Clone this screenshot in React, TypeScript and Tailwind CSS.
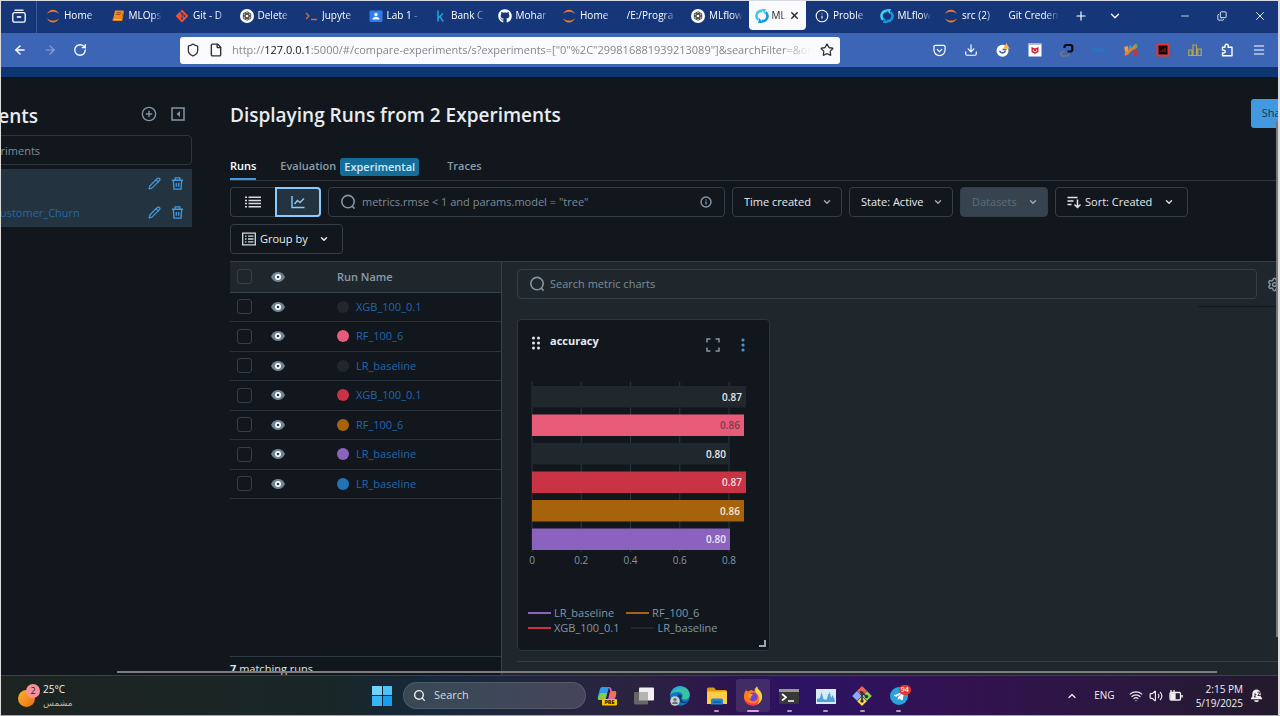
import type { ReactNode } from "react";
import {
  ArrowLeft, ArrowRight, RotateCw, Shield, File, Star, Plus, ChevronDown, ChevronUp, Minus, X, Copy,
  Download, Puzzle, Menu, CirclePlus, Pencil, Trash2, Search, Info, Settings, Wifi, Volume2,
} from "lucide-react";
import { FaGithub, FaGitAlt, FaTelegramPlane } from "react-icons/fa";

const Jupyter = () => (
  <svg viewBox="0 0 14 14" className="size-[14px]" fill="#f07726">
    <path d="M1 5C2 2.400 4.200.8 7 .8S12 2.400 13 5C11.500 3.500 9.500 2.700 7 2.700S2.500 3.500 1 5z" />
    <path d="M1 9.200c1 2.600 3.200 4.200 6 4.200s5-1.600 6-4.200c-1.500 1.500-3.500 2.300-6 2.300s-4.500-.8-6-2.300z" />
  </svg>
);
const Mlflow = () => (
  <svg viewBox="0 0 14 14" className="size-[14px]" fill="none" strokeWidth="2.600">
    <path d="M3.400 10.800A5 5 0 0 1 7.500 2" stroke="#43c9ed" />
    <path d="M10.600 3.200A5 5 0 0 1 6.500 12" stroke="#0e9be0" />
    <path d="M6.500 0H11L9.500 5z" fill="#43c9ed" />
    <path d="M7.500 14H3L4.500 9z" fill="#0e9be0" />
  </svg>
);
const Gpt = () => (
  <svg viewBox="0 0 14 14" className="size-[14px]">
    <circle cx="7" cy="7" r="7" fill="#fff" />
    <g fill="none" stroke="#444" strokeWidth=".9">
      <rect x="5.200" y="2.800" width="3.600" height="8.400" rx="1.800" />
      <rect x="5.200" y="2.800" width="3.600" height="8.400" rx="1.800" transform="rotate(60 7 7)" />
      <rect x="5.200" y="2.800" width="3.600" height="8.400" rx="1.800" transform="rotate(120 7 7)" />
    </g>
  </svg>
);
const Book = () => (
  <svg viewBox="0 0 14 14" className="size-[14px]">
    <path d="M4 1.500h8.500L10.800 9H2.300z" fill="#f58a1f" />
    <path d="M2.300 9h8.500l1.700-7.500.6 1L11.300 12H2.600c-1.400 0-1.600-1.800-.3-3z" fill="#e57b10" />
    <path d="M3 10.400h7.500" stroke="#ffd9a8" strokeWidth=".9" />
    <path d="M5.500 3.700h4.500M5.100 5.500h4.500" stroke="#8a4305" strokeWidth=".8" />
  </svg>
);
const Prompt = () => (
  <svg viewBox="0 0 14 14" className="size-[14px]" fill="none" stroke="#c8703a" strokeWidth="1.300">
    <path d="M2 4l3 3-3 3M7 10.500h6" />
  </svg>
);
const Classroom = () => (
  <svg viewBox="0 0 14 14" className="size-[14px]">
    <rect x=".5" y="1.500" width="13" height="11.500" rx="1.200" fill="#2f7de9" />
    <circle cx="7" cy="5.500" r="1.700" fill="#fff" />
    <path d="M3.500 10.500c0-3.600 7-3.600 7 0z" fill="#fff" />
  </svg>
);
const Kaggle = () => (
  <svg viewBox="0 0 14 14" className="size-[14px]" fill="none" stroke="#1fa8d8" strokeWidth="1.500">
    <path d="M5 1.500v11M10 4.500L5.300 9M7 7.600l3.200 4.900" />
  </svg>
);

type Tab = { label: string; icon?: ReactNode; active?: boolean };
const tabs: Tab[] = [
  { label: "Home", icon: <Jupyter /> },
  { label: "MLOps", icon: <Book /> },
  { label: "Git - D", icon: <FaGitAlt className="size-[14px] text-[#f0502f]" /> },
  { label: "Delete", icon: <Gpt /> },
  { label: "Jupyte", icon: <Prompt /> },
  { label: "Lab 1 -", icon: <Classroom /> },
  { label: "Bank C", icon: <Kaggle /> },
  { label: "Mohar", icon: <FaGithub className="size-[14px] text-white" /> },
  { label: "Home", icon: <Jupyter /> },
  { label: "/E:/Progra" },
  { label: "MLflow", icon: <Gpt /> },
  { label: "MLf", icon: <Mlflow />, active: true },
  { label: "Proble", icon: <Info className="size-[14px]" strokeWidth={1.800} /> },
  { label: "MLflow", icon: <Mlflow /> },
  { label: "src (2)", icon: <Jupyter /> },
  { label: "Git Creden" },
];

function TabStrip() {
  return (
    <div className="flex h-8 shrink-0 bg-[#15377a] text-white">
      <button aria-label="Firefox View" className="flex w-9 shrink-0 items-center justify-center border-r border-[#3c5a94] pb-[2px]">
        <svg viewBox="0 0 14 14" className="size-[14px]" fill="none" stroke="currentColor" strokeWidth="1.300">
          <path d="M2.500 1.200h9" />
          <rect x=".8" y="3.600" width="12.400" height="9.600" rx="1.800" />
          <path d="M4.800 8h4.400" strokeWidth="1.600" />
        </svg>
      </button>
      <div className="flex min-w-0 flex-1">
        {tabs.map((t, i) => (
          <button
            key={i}
            className={
              t.active
                ? "mb-[3px] ml-[2px] flex min-w-0 flex-1 items-center gap-[3px] rounded-b-sm bg-[#fbfbfe] pl-[6px] text-[10px] text-[#222]"
                : "flex min-w-0 flex-1 items-center gap-1 pr-1 pb-[3px] pl-[9px] text-[10px]"
            }
          >
            {t.icon && <span className="shrink-0">{t.icon}</span>}
            <span className="min-w-0 flex-1 overflow-hidden mask-r-from-70% text-left whitespace-nowrap">{t.label}</span>
            {t.active && <X className="mr-[6px] size-[11px] shrink-0" strokeWidth={3} />}
          </button>
        ))}
      </div>
      <div className="flex w-[214px] shrink-0 items-center justify-between pr-[11px] pb-[2px] pl-[10px]">
        <div className="flex gap-5">
          <button aria-label="New tab"><Plus className="size-[14px]" strokeWidth={2} /></button>
          <button aria-label="List all tabs"><ChevronDown className="size-[14px]" strokeWidth={2.200} /></button>
        </div>
        <div className="flex items-center gap-[26px]">
          <button aria-label="Minimize"><Minus className="size-3" strokeWidth={1.500} /></button>
          <button aria-label="Restore"><Copy className="size-[10px] -scale-y-100" strokeWidth={2} /></button>
          <button aria-label="Close"><X className="size-[14px]" strokeWidth={1.500} /></button>
        </div>
      </div>
    </div>
  );
}

function NavBar() {
  return (
    <div className="flex h-[34px] shrink-0 items-center bg-[#3d65b5] text-white">
      <div className="flex w-[179px] shrink-0 items-center gap-4 pl-3">
        <button aria-label="Back"><ArrowLeft className="size-[14px]" strokeWidth={2.500} /></button>
        <button aria-label="Forward" className="text-[#8aa4d6]"><ArrowRight className="size-[14px]" /></button>
        <button aria-label="Reload"><RotateCw className="size-[14px]" strokeWidth={2.300} /></button>
      </div>
      <div className="flex h-[27px] w-[660px] items-center gap-[9px] rounded-[3px] bg-[#fafaff] px-[6px] text-[#333]">
        <Shield className="size-[14px] shrink-0" strokeWidth={2.200} />
        <File className="size-[14px] shrink-0" strokeWidth={2.400} />
        <div className="min-w-0 flex-1 overflow-hidden mask-r-from-95% text-[11px] whitespace-nowrap text-[#85858f]">
          http://<span className="text-[#15141a]">127.0.0.1</span>
          :5000/#/compare-experiments/s?experiments=["0"%2C"299816881939213089"]&amp;searchFilter=&amp;ord
        </div>
        <button aria-label="Bookmark"><Star className="size-[14px]" strokeWidth={2.200} /></button>
      </div>
      <div className="flex min-w-0 flex-1 items-center justify-end gap-[18px] pr-3">
        <svg viewBox="0 0 14 14" className="size-[13px]" fill="none" stroke="currentColor" strokeWidth="1.300">
          <path d="M2.500 1.500h9q1.500 0 1.500 1.500v3.500a6 6 0 0 1-12 0V3q0-1.500 1.500-1.500z" />
          <path d="M4.200 5.500L7 8.200l2.800-2.700" />
        </svg>
        <Download className="size-[14px]" strokeWidth={2} />
        <svg viewBox="0 0 14 14" className="size-[14px]">
          <circle cx="6.500" cy="7.800" r="6" fill="#fff" />
          <path d="M3.500 7.800a3.200 3.200 0 0 0 6 0M6.500 6.500h4" fill="none" stroke="#3d65b5" strokeWidth="1.600" />
          <path d="M10.400 0l3.400 5.800H7z" fill="#ffb638" />
        </svg>
        <svg viewBox="0 0 14 14" className="size-[14px]">
          <path d="M.5.5h13v13H.5z" fill="#fff" />
          <path d="M.5.5h13V2H.5z" fill="#bbb" />
          <path d="M3.500 4l3.500 1.500L10.500 4v5L7 11 3.500 9z" fill="#d3142c" />
          <path d="M5.300 6.500v1.500L7 9l1.700-1V6.500" fill="none" stroke="#fff" />
        </svg>
        <svg viewBox="0 0 14 14" className="size-[14px]" fill="none" strokeWidth="2.200">
          <path d="M5 8.500H3.500Q1 8.500 1 11t2.500 2H6q2.500 0 2.500-2.500" stroke="#777" strokeWidth="1.600" />
          <path d="M4.500 5V3.800Q4.500 2 6.500 2h3.800q2 0 2 2v2.500q0 2-2 2H7.500" stroke="#0a0a0a" />
        </svg>
        <svg viewBox="0 0 14 14" className="size-[14px]" fill="none" stroke="#2a72c4" strokeWidth="1.800">
          <path d="M2 4.500v5M5 4v6M9 4v6M12 4.500v5M2 7h10" />
        </svg>
        <svg viewBox="0 0 14 14" className="size-[14px]">
          <path d="M0 4l4-1 1 8-3 1z" fill="#e9a13a" />
          <path d="M5 3l2-1 1 4-3 3z" fill="#2aa0dc" />
          <path d="M9 3l3-3 2 4-4 3z" fill="#4fb04f" />
          <path d="M9 7h4v6H9z" fill="#c8323a" />
          <path d="M1 12L11.500 3" stroke="#f47d1f" strokeWidth="2.400" />
        </svg>
        <svg viewBox="0 0 14 14" className="size-[14px]">
          <path d="M.5.5h13v13H.5z" fill="#e2382f" />
          <path d="M2.500 2.500h9v9h-9z" fill="#160606" />
          <path d="M5 9V7.500M7 9V6M9 9V4.500" stroke="#a32020" />
        </svg>
        <svg viewBox="0 0 14 14" className="size-[14px]" fill="none" stroke="#b9a742" strokeWidth="1.200">
          <path d="M.8 7h3.200v5.500H.8zM5 2h3.500v10.500H5zM9.800 6h3.400v6.500H9.800z" />
        </svg>
        <svg viewBox="0 0 14 14" className="size-[14px]" fill="none" stroke="currentColor" strokeWidth="1.400">
          <path d="M2.500 4.200H5V2.800a1.600 1.600 0 0 1 3.200 0v1.400H12v8.600H2.500V10h1.300a1.400 1.400 0 0 0 0-2.900H2.500z" strokeLinejoin="round" />
        </svg>
        <Menu className="size-[14px]" strokeWidth={1.800} />
      </div>
    </div>
  );
}

function Sidebar() {
  return (
    <aside className="flex w-[191px] shrink-0 justify-end overflow-hidden">
      <div className="w-[264px] shrink-0 pt-[26px]">
        <div className="flex h-[22px] items-center justify-end gap-[14px] pr-[7px] text-[#8396a5]">
          <h2 className="mr-[89px] pt-1 text-[19px] font-semibold text-[#e8ecf0]">Experiments</h2>
          <button aria-label="New experiment"><CirclePlus className="size-4" /></button>
          <button aria-label="Collapse sidebar">
            <svg viewBox="0 0 14 14" className="size-[14px]" fill="none" stroke="currentColor" strokeWidth="1.500">
              <path d="M1 1h12v12H1z" />
              <path d="M9 4v6L5.500 7z" fill="currentColor" stroke="none" />
            </svg>
          </button>
        </div>
        <input
          aria-label="Search experiments"
          placeholder="Search experiments"
          className="mt-[10px] block h-[30px] w-full rounded-[4px] border border-[#2c363f] bg-transparent pl-[9px] text-[11px] placeholder:text-[#7b8c99]"
        />
        <ul className="mt-1 bg-[#233340] text-[11px]">
          {["", "Customer_Churn"].map((name) => (
            <li key={name} className="flex h-[29px] items-center justify-end gap-[10px] pr-2 text-[#4299e0]">
              {name && <a href="#experiment" className="mr-auto pt-[2px] pl-[65px] text-[#2067ae]">{name}</a>}
              <button aria-label="Rename experiment"><Pencil className="size-[13px]" strokeWidth={2.200} /></button>
              <button aria-label="Delete experiment">
                <svg viewBox="0 0 14 14" className="size-[13px]" fill="none" stroke="currentColor" strokeWidth="1.400">
                  <path d="M1 3.500h12M4.500 3.500V1h5v2.500M2.500 3.500l.7 9.500h7.600l.7-9.500M5.700 6.500v4M8.300 6.500v4" />
                </svg>
              </button>
            </li>
          ))}
        </ul>
      </div>
    </aside>
  );
}

const boxed = "h-[30px] rounded-[4px] border border-[#323e48]";

function Dropdown({ label, className, disabled }: { label: string; className: string; disabled?: boolean }) {
  return (
    <div className={`relative shrink-0 ${className}`}>
      <select
        aria-label={label}
        disabled={disabled}
        className={
          disabled
            ? `${boxed} block w-full appearance-none bg-[#37444f] pl-[11px] text-[11px] text-[#5b6c7a] opacity-100`
            : label.startsWith("Sort")
              ? `${boxed} block w-full appearance-none bg-transparent pl-[29px] text-[11px] text-[#e8ecf0]`
              : `${boxed} block w-full appearance-none bg-transparent pl-[11px] text-[11px] text-[#e8ecf0]`
        }
      >
        <option>{label}</option>
      </select>
      {label.startsWith("Sort") && (
        <svg viewBox="0 0 14 14" className="absolute top-2 left-[12px] size-[14px]" fill="none" stroke="#e0e6ea" strokeWidth="1.500">
          <path d="M.5 2.500h10M.5 6h6M.5 9.500h4M10.500 4.500v8M7.500 9.500l3 3 3-3" />
        </svg>
      )}
      <ChevronDown
        className={
          label.startsWith("Sort")
            ? "pointer-events-none absolute top-[10px] right-[14px] size-[10px] text-[#d5dce2]"
            : "pointer-events-none absolute top-[10px] right-[10px] size-[10px] text-[#9aa9b5]"
        }
        strokeWidth={3.500}
      />
    </div>
  );
}

const Eye = () => (
  <svg viewBox="0 0 14 10" className="h-[10px] w-[14px]">
    <path d="M0 5C1.500 1.800 4 0 7 0s5.500 1.800 7 5c-1.500 3.200-4 5-7 5S1.500 8.200 0 5z" fill="#6f8393" />
    <circle cx="7" cy="5" r="3" fill="#fff" />
    <circle cx="7" cy="5" r="1.300" fill="#2b3944" />
  </svg>
);

const Lens = () => (
  <svg viewBox="0 0 16 16" className="size-4 shrink-0 text-[#8396a5]" fill="none" stroke="currentColor" strokeWidth="1.600">
    <circle cx="8" cy="7.600" r="6.200" />
    <path d="M12 12l2.600 2.600" />
  </svg>
);

const runs = [
  { name: "XGB_100_0.1", dot: "bg-[#20272e]" },
  { name: "RF_100_6", dot: "bg-[#e85c7a]" },
  { name: "LR_baseline", dot: "bg-[#20272e]" },
  { name: "XGB_100_0.1", dot: "bg-[#c93343]" },
  { name: "RF_100_6", dot: "bg-[#a6630c]" },
  { name: "LR_baseline", dot: "bg-[#8b63bf]" },
  { name: "LR_baseline", dot: "bg-[#2272b4]" },
];
const box = "block size-[15px] appearance-none rounded-[3px] border border-[#33414c]";

function RunsTable() {
  return (
    <div className="flex w-[272px] shrink-0 flex-col border-r border-[#37444f]">
      <table className="h-[237px] w-full table-fixed text-[11px]">
        <thead>
          <tr className="h-[30px] border-b border-[#37444f] bg-[#1f272d]">
            <th className="w-10 pl-[7px]"><input type="checkbox" aria-label="Select all runs" className={box} /></th>
            <th className="w-[67px] pl-px"><Eye /></th>
            <th className="text-left font-semibold text-[#8b9ba8]">Run Name</th>
          </tr>
        </thead>
        <tbody>
          {runs.map((r, i) => (
            <tr key={i} className="border-b border-[#2a343c]">
              <td className="pl-[7px]"><input type="checkbox" aria-label={`Select run ${r.name}`} className={box} /></td>
              <td className="pl-px"><Eye /></td>
              <td>
                <div className="flex items-center gap-[7px]">
                  <span className={`size-3 rounded-full ${r.dot}`} />
                  <a href="#run" className="text-[#2067ae]">{r.name}</a>
                </div>
              </td>
            </tr>
          ))}
        </tbody>
      </table>
      <div className="mt-auto h-[19px] border-t border-[#2f3b44] pt-1 text-[11px] leading-4 text-[#dfe5ea]">
        <strong className="font-bold">7</strong> matching runs
      </div>
    </div>
  );
}

const bars = [
  { v: "0.87", w: 214, fill: "#20272d", text: "#e6eaee" },
  { v: "0.86", w: 212, fill: "#e85c7a", text: "#7d3b4d" },
  { v: "0.80", w: 198, fill: "#20272d", text: "#e6eaee" },
  { v: "0.87", w: 214, fill: "#c93343", text: "#f4dfe2" },
  { v: "0.86", w: 212, fill: "#a6630c", text: "#f2e6d6" },
  { v: "0.80", w: 198, fill: "#8b63bf", text: "#ede6f6" },
];
const legend = [
  { name: "LR_baseline", line: "bg-[#8b63bf]" },
  { name: "RF_100_6", line: "bg-[#a6630c]" },
  { name: "XGB_100_0.1", line: "bg-[#c93343]" },
  { name: "LR_baseline", line: "bg-[#20272d]" },
];

function ChartCard() {
  return (
    <section className="relative flex h-[332px] w-[253px] flex-col rounded-[4px] border border-[#2b363f] bg-[#11171d]">
      <header className="flex items-start pt-[13px] pr-[23px] pl-[13px]">
        <svg viewBox="0 0 10 14" className="mt-[3px] h-[14px] w-[10px]" fill="#e0e6ea">
          {[2, 7, 12].map((y) => (
            <g key={y}><circle cx="2.500" cy={y} r="1.500" /><circle cx="7.500" cy={y} r="1.500" /></g>
          ))}
        </svg>
        <h3 className="ml-[9px] text-[11px] leading-4 font-bold text-[#e8ecf0]">accuracy</h3>
        <button aria-label="Full screen" className="mt-[5px] ml-auto text-[#8396a5]">
          <svg viewBox="0 0 14 14" className="size-[14px]" fill="none" stroke="currentColor" strokeWidth="1.500">
            <path d="M1 4.500V1h3.500M9.500 1H13v3.500M13 9.500V13H9.500M4.500 13H1V9.500" />
          </svg>
        </button>
        <button aria-label="Chart options" className="mt-[5px] ml-5">
          <svg viewBox="0 0 6 14" className="h-[14px] w-[6px]" fill="#4299e0">
            <circle cx="3" cy="2" r="1.600" /><circle cx="3" cy="7" r="1.600" /><circle cx="3" cy="12" r="1.600" />
          </svg>
        </button>
      </header>
      <svg viewBox="0 0 251 194" className="mt-[30px] h-[194px] w-full" role="img" aria-label="accuracy by run">
        {["0", "0.2", "0.4", "0.6", "0.8"].map((t, i) => (
          <g key={t}>
            <path d={`M${14 + i * 49.250} 0v170`} stroke="#2c363e" />
            <text x={14 + i * 49.250} y="182" textAnchor="middle" fontSize="10" fill="#8396a5">{t}</text>
          </g>
        ))}
        {bars.map((b, i) => (
          <g key={i}>
            <rect x="14" y={4 + i * 28.500} width={b.w} height="21.500" fill={b.fill} />
            <text x={10 + b.w} y={18.500 + i * 28.500} textAnchor="end" fontSize="10" fontWeight="600" fill={b.text}>{b.v}</text>
          </g>
        ))}
      </svg>
      <div className="mt-[29px] flex flex-wrap gap-x-[12px] pl-[10px] text-[11px] leading-[15px] text-[#8396a5]">
        {legend.map((l, i) => (
          <span key={i} className="flex items-center gap-[3px]">
            <span className={`h-[2px] w-[23px] ${l.line}`} />
            {l.name}
          </span>
        ))}
      </div>
      <span className="absolute right-[3px] bottom-[3px] size-[7px] border-r-2 border-b-2 border-[#9aa9b5]" />
    </section>
  );
}

function Main() {
  return (
    <main className="flex min-w-0 flex-1 flex-col overflow-hidden pl-[38px]">
      <div className="-mr-8 flex h-[76px] shrink-0 items-start justify-between pt-[22px]">
        <h1 className="pt-1 text-[19px] leading-6 font-semibold text-[#e8ecf0]">Displaying Runs from 2 Experiments</h1>
        <button className="h-[29px] w-[59px] rounded-[3px] bg-[#4299e0] pr-2 text-[11px] text-[#153350]">Share</button>
      </div>
      <nav className="flex h-7 shrink-0 items-center gap-6 border-b border-[#2c363f] text-[11px] font-semibold text-[#8b9ba8]">
        <a href="#runs" className="flex h-full items-center border-b-2 border-[#4299e0] pt-[2px] text-white">Runs</a>
        <a href="#evaluation" className="flex items-center gap-1">
          Evaluation
          <span className="rounded-[3px] bg-[#156d99] px-1 leading-[18px] text-[#d5e9f5]">Experimental</span>
        </a>
        <a href="#traces" className="ml-1">Traces</a>
      </nav>
      <div className="mt-[6px] flex shrink-0 flex-wrap gap-[7px]">
        <div className="flex h-[30px] w-[91px]">
          <button aria-label="Table view" className="flex flex-1 items-center justify-center rounded-l-[4px] border border-r-0 border-[#323e48] text-[#d5dce2]">
            <svg viewBox="0 0 16 12" className="h-3 w-4" fill="none" stroke="currentColor" strokeWidth="1.500">
              <path d="M0 1.200h2M3.500 1.200H16M0 4.400h2M3.500 4.400H16M0 7.600h2M3.500 7.600H16M0 10.800h2M3.500 10.800H16" />
            </svg>
          </button>
          <button aria-label="Chart view" className="flex w-[46px] items-center justify-center rounded-r-[4px] border-2 border-[#8acaff] bg-[#233340] text-[#8acaff]">
            <svg viewBox="0 0 14 14" className="size-[14px]" fill="none" stroke="currentColor" strokeWidth="1.400">
              <path d="M1 1v11.500h12.500M3.500 9l3-3.500 2.500 2 4-4" />
            </svg>
          </button>
        </div>
        <div className={`${boxed} flex w-[397px] items-center gap-[6px] px-[11px]`}>
          <Lens />
          <input aria-label="Filter runs" placeholder={'metrics.rmse < 1 and params.model = "tree"'} className="min-w-0 flex-1 bg-transparent text-[11px] placeholder:text-[#7b8c99]" />
          <Info className="mr-px size-3 shrink-0 text-[#8396a5]" strokeWidth={2.800} />
        </div>
        <Dropdown label="Time created" className="w-[110px]" />
        <Dropdown label="State: Active" className="w-[104px]" />
        <Dropdown label="Datasets" className="w-[88px]" disabled />
        <Dropdown label="Sort: Created" className="w-[133px]" />
        <div className="w-full">
          <button className={`${boxed} flex w-[113px] items-center gap-1 pr-[13px] pl-[11px] text-[11px] text-[#e8ecf0]`}>
            <svg viewBox="0 0 14 14" className="size-[14px]" fill="none" stroke="#d5dce2" strokeWidth="1.300">
              <path d="M.7 1.200h12.600v11.600H.7zM3 4.200h1.500M6 4.200h5.500M3 7h1.500M6 7h5.500M3 9.800h1.500M6 9.800h5.500" />
            </svg>
            Group by
            <ChevronDown className="ml-auto size-[10px]" strokeWidth={3.500} />
          </button>
        </div>
      </div>
      <div className="mt-[7px] flex min-h-0 flex-1 border-t border-[#323e48]">
        <RunsTable />
        <div className="flex min-w-0 flex-1 flex-col overflow-hidden bg-[#1f272d] pl-[15px]">
          <div className="mt-[7px] -mr-1 flex shrink-0 items-center gap-[10px]">
            <label className={`${boxed} flex min-w-0 flex-1 items-center gap-[5px] px-[11px]`}>
              <Lens />
              <input aria-label="Search metric charts" placeholder="Search metric charts" className="min-w-0 flex-1 bg-transparent text-[11px] placeholder:text-[#7b8c99]" />
            </label>
            <button aria-label="Chart settings" className="shrink-0 text-[#8396a5]"><Settings className="size-[15px]" strokeWidth={2.300} /></button>
          </div>
          <div className="mt-[7px] ml-auto h-px w-20 shrink-0 bg-[#12191f]" />
          <div className="mt-3 shrink-0"><ChartCard /></div>
          <div className="mt-auto h-[14px] shrink-0 border-t border-[#323e48]" />
        </div>
      </div>
    </main>
  );
}

const apps: { name: string; icon: ReactNode; open?: boolean; active?: boolean }[] = [
  { name: "Copilot", icon: (
    <svg viewBox="0 0 20 20" className="size-5">
      <path d="M5 1h7L9 12q-.6 2-2.500 2H3q-3 0-2-4l2-7q.5-2 2-2z" fill="#2f9be8" />
      <path d="M3.500 7L1 12q-.5 2 2 2h3.500q2 0 2.500-2l1-5z" fill="#8acb3c" />
      <path d="M12 1q2 0 2.500 2l.5 2h2q3 0 2 4l-2 6q-.7 2-2.500 2H8q2 0 2.500-2L13 6q.5-4-3-5z" fill="#d85ac4" />
      <path d="M13 6l5.500-1q1 1 .5 4l-1 3h-6z" fill="#f2715a" />
      <rect x="5" y="13" width="15" height="6.500" rx="1" fill="#ffc400" />
      <text x="12.500" y="18.300" fontSize="5.500" fontWeight="800" textAnchor="middle" fill="#33260a">PRE</text>
    </svg>) },
  { name: "Task view", icon: (
    <svg viewBox="0 0 20 20" className="size-5">
      <rect x="5" y="1.500" width="15" height="13" rx="1" fill="#f0f0f0" />
      <rect x="0" y="6" width="14" height="12.500" rx="1" fill="#666" />
      <path d="M5 6h9v8.500H5z" fill="#b4b4b4" />
    </svg>) },
  { name: "Edge", icon: (
    <svg viewBox="0 0 20 20" className="size-5">
      <circle cx="10" cy="10" r="9.800" fill="#1375c4" />
      <path d="M.3 9C1 4 5 .2 10 .2c6 0 9.800 4.300 9.800 8.300 0 3.200-2.300 5-5 5-2.200 0-3.200-.8-2.700-1.700C13.800 9 11.500 6 8 6 4.500 6 1.200 7 .3 9z" fill="#35c3a4" />
      <path d="M.3 9C1 4 5 .2 10 .2c2 0 4 .6 5.500 1.600C9 2 3 4 .3 9z" fill="#2aa9e0" />
      <path d="M8.200 8.500c-1.800 2.800-.6 7.500 4.500 8.500 2.300.4 4.500-.3 6-1.600-2.500.8-7 .6-7.500-2.400-.2-1.300.8-1.700.8-2.700S10 7.500 8.200 8.500z" fill="#0c3f78" />
      <circle cx="5" cy="15" r="4.800" fill="#c9ced2" />
      <circle cx="5" cy="13.600" r="1.700" fill="#6a7075" />
      <path d="M2 18c0-3.500 6-3.500 6 0z" fill="#6a7075" />
    </svg>) },
  { name: "File Explorer", open: true, icon: (
    <svg viewBox="0 0 20 20" className="size-5">
      <path d="M0 3q0-1.500 1.500-1.500H7L9 4h9.500Q20 4 20 5.500V10H0z" fill="#e09a10" />
      <path d="M0 5.500h20V18H0z" fill="#ffcd45" />
      <path d="M4 14q0-1.500 1.500-1.500h9Q16 12.500 16 14v4.500H4z" fill="#1e86d8" />
      <path d="M6 16h8" stroke="#0f5ba8" strokeWidth="1.500" />
    </svg>) },
  { name: "Firefox", open: true, active: true, icon: (
    <svg viewBox="0 0 20 20" className="size-5">
      <path d="M3 4l2 1.500Q7 4 8.500 4l3 1.500Q11.500 2 14 .5q.5 2 2.500 4Q19.500 7.500 19 12c-.8 4.500-4.500 7.500-9 7.500S1.500 16.500 1 12C.7 9 1.500 6 3 4z" fill="#ff7a22" />
      <path d="M14 .5q.5 2 2.500 4 3 3 2.500 7.500c-.4 2.500-2 4.500-4 6 2-4 1.500-8-1-10.500-1.500-1.500-3-4 0-7z" fill="#ffd43a" />
      <path d="M1 11c1.500 4.500 5 6.500 9 6.500 3 0 5-1.500 6-4-.5 4-3.500 6-6.500 6C5 19.500 1.500 16 1 11z" fill="#f0355c" />
      <circle cx="10.300" cy="10.800" r="4.400" fill="#7a3fd0" />
      <path d="M5 8q3-1 5 .7L8 10.500q-1 .8.500 2-3 .5-4-2.500z" fill="#ffa22e" />
    </svg>) },
  { name: "Terminal", open: true, icon: (
    <svg viewBox="0 0 20 20" className="size-5">
      <rect x="0" y="3" width="20" height="15" rx="1" fill="#383838" />
      <path d="M0 3h20v3H0z" fill="#999" />
      <path d="M3 8l4 3.300L3 14.500M9 15h6" fill="none" stroke="#fff" strokeWidth="1.700" />
    </svg>) },
  { name: "Monitor", open: true, icon: (
    <svg viewBox="0 0 20 20" className="size-5">
      <rect x="0" y="3" width="20" height="15" fill="#d8ecf7" />
      <path d="M1 16V13l3-1 1.500-6 2 7 3 1 1.500-5 2-3 1 6 1.500-3 2 4 .5 3z" fill="#4ba3dc" />
    </svg>) },
  { name: "Git", open: true, icon: (
    <svg viewBox="0 0 20 20" className="size-5">
      <path d="M10 0l4.800 4.800L10 9.600 5.200 4.800z" fill="#f06458" />
      <path d="M5 5l4.800 5L5 14.800.2 10z" fill="#86b0f2" />
      <path d="M15 5l4.800 5-4.800 4.800L10.200 10z" fill="#8fd05c" />
      <path d="M10 10.400l4.800 4.800L10 20l-4.800-4.800z" fill="#f8dc50" />
      <path d="M8 5l6 5M10 6v9" stroke="#33333b" strokeWidth="1.600" />
      <g fill="#33333b"><circle cx="10" cy="7" r="1.700" /><circle cx="14.500" cy="10.500" r="1.700" /><circle cx="10" cy="15" r="1.700" /></g>
    </svg>) },
  { name: "Telegram", open: true, icon: (
    <span className="relative flex size-[18px] items-center justify-center rounded-full bg-[#2aa1da] text-white">
      <FaTelegramPlane className="size-3" />
      <span className="absolute -top-[2px] left-[9px] rounded-md bg-[#e8342e] px-[2px] text-[7px] leading-[10px] font-semibold">94</span>
    </span>) },
];

function Taskbar() {
  return (
    <footer className="flex h-10 shrink-0 items-center border-t border-[#3a4046] bg-[linear-gradient(90deg,#1d2422_0%,#1a2626_25%,#16293a_33%,#2b2340_50%,#2d1450_57%,#2c1364_63%,#32124f_75%,#2b1740_88%,#231a2c_100%)] text-[#f0f0f0]">
      <div className="flex flex-1 items-center gap-[3px] pl-[17px]">
        <span className="relative block h-[23px] w-[22px]">
          <span className="absolute bottom-0 left-0 size-[17px] rounded-full bg-linear-to-br from-[#fbb52c] to-[#ea6a12]" />
          <span className="absolute top-0 right-0 size-[14px] rounded-full bg-[#f7919c] text-center text-[9px] leading-[14px] text-[#32161b]">2</span>
        </span>
        <div className="text-[10px] leading-[14px]">
          <div>25°C</div>
          <div dir="rtl" className="text-[9px] text-[#b8bcbc]">مشمس</div>
        </div>
      </div>
      <div className="flex shrink-0 items-center gap-[3px]">
        <button aria-label="Start" className="flex w-9 justify-center">
          <span className="grid size-5 grid-cols-2 gap-px">
            <span className="bg-[#6dd3fb]" /><span className="bg-[#4cc2f8]" /><span className="bg-[#35b6f5]" /><span className="bg-[#149ff0]" />
          </span>
        </button>
        <label className="flex h-[27px] w-[183px] items-center gap-2 rounded-full border border-white/10 bg-white/15 pl-[9px]">
          <Search className="size-[13px] shrink-0" strokeWidth={2.500} />
          <input aria-label="Search" placeholder="Search" className="min-w-0 flex-1 bg-transparent text-[11px] placeholder:text-[#d5d8dc]" />
        </label>
        <div className="grid w-[328px] grid-cols-9">
          {apps.map((a) => (
            <button
              key={a.name}
              aria-label={a.name}
              className={
                a.active
                  ? "relative mx-px flex h-[33px] items-center justify-center rounded-[3px] bg-white/10"
                  : "relative flex h-[33px] items-center justify-center"
              }
            >
              {a.icon}
              {a.open && (
                <span
                  className={
                    a.active
                      ? "absolute bottom-0 h-[2px] w-3 rounded-full bg-[#dfa0ea]"
                      : "absolute bottom-0 h-[2px] w-[5px] rounded-full bg-[#a8a0b4]"
                  }
                />
              )}
            </button>
          ))}
        </div>
      </div>
      <div className="flex flex-1 items-center justify-end pr-[15px] text-[10px]">
        <ChevronUp className="mr-4 size-3" strokeWidth={2.500} />
        <span className="mr-[14px]">ENG</span>
        <div className="mr-[13px] flex items-center gap-[6px]">
          <Wifi className="size-[14px]" strokeWidth={2} />
          <Volume2 className="size-[14px]" strokeWidth={2} />
          <svg viewBox="0 0 14 12" className="h-3 w-[14px]" fill="none" stroke="currentColor" strokeWidth="1.300">
            <rect x="1" y="2.500" width="10.500" height="7.500" rx="1.200" />
            <path d="M13 5v2.500" strokeWidth="1.500" />
            <path d="M2 4h4v5H2zM2 0v4M5 0v4" fill="currentColor" />
          </svg>
        </div>
        <div className="mr-[7px] text-right leading-[14px]">
          <div>2:15 PM</div>
          <div>5/19/2025</div>
        </div>
        <svg viewBox="0 0 14 14" className="size-[13px]" fill="#f0f0f0">
          <path d="M1 11V10l1.500-2V5a4.500 4.500 0 0 1 9 0v3l1.500 2v1zM4.500 12h5a2.500 2 0 0 1-5 0z" />
          <path d="M8 3.500h3L8.500 7h3M4.500 5.500h2l-2 3h2" fill="none" stroke="#2b1f35" />
        </svg>
      </div>
    </footer>
  );
}

export default function App() {
  return (
    <div className="relative flex h-screen w-full flex-col overflow-hidden border-t border-r-2 border-b border-l border-t-[#d5dae4] border-r-[#dcdcdc] border-b-[#a7a5ac] border-l-[#dcdcdc] bg-[#11171d] font-['Open_Sans','DejaVu_Sans',sans-serif]">
      <TabStrip />
      <NavBar />
      <div className="h-[10px] shrink-0 bg-[#0d3571]" />
      <div className="flex min-h-0 flex-1">
        <Sidebar />
        <Main />
      </div>
      <Taskbar />
      <div className="absolute top-[120px] right-0 bottom-[78px] w-[2px] bg-[#75777a]" />
      <div className="absolute right-[61px] bottom-[42px] left-[116px] h-[2px] bg-[#7b7d80]" />
    </div>
  );
}
